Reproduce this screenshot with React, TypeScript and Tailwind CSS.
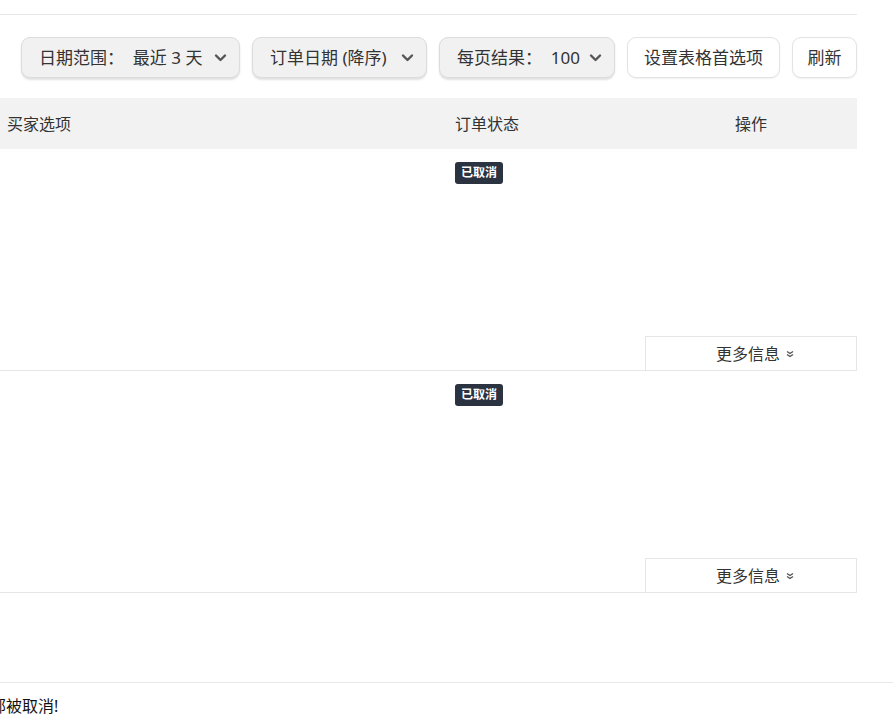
import React from "react";

const font = { fontFamily: '"Noto Sans", "Noto Sans CJK SC", sans-serif' };

const Chevron = () => (
  <svg width="13" height="12" viewBox="0 0 13 12" className="text-[#555]">
    <path d="M2 3.5l4.5 4.5 4.5-4.5" fill="none" stroke="currentColor" strokeWidth="2.4" strokeLinecap="round" strokeLinejoin="round" />
  </svg>
);

const DoubleChevron = () => (
  <svg width="8" height="8" viewBox="0 0 8 8" className="text-[#555]">
    <path d="M1 1.5l3 2 3-2M1 4.5l3 2 3-2" fill="none" stroke="currentColor" strokeWidth="1.4" />
  </svg>
);

const SelectButton = ({ label, width }: { label: string; width: string }) => (
  <div
    className={`${width} h-[41px] flex items-center justify-between pl-[17px] pr-[12px] rounded-[9px] bg-[#f1f1f1] border border-[#dcdcdc] shadow-[0_2px_2px_rgba(0,0,0,0.12)] text-[17px] text-[#333]`}
  >
    <span className="whitespace-pre">{label}</span>
    <Chevron />
  </div>
);

const PlainButton = ({ label, width }: { label: string; width: string }) => (
  <div
    className={`${width} h-[41px] flex items-center justify-center rounded-[9px] bg-white border border-[#e3e3e3] shadow-[0_1px_2px_rgba(0,0,0,0.06)] text-[17px] text-[#333]`}
  >
    {label}
  </div>
);

const OrderRow = () => (
  <div className="flex h-[222px]">
    <div className="w-[448px] border-b border-[#e6e6e6]" />
    <div className="w-[197px] border-b border-[#e6e6e6] pl-[7px] pt-[10px]">
      <span className="inline-flex h-[22px] items-center px-[6px] rounded-[3px] bg-[#2b3240] text-white text-[12px] font-bold leading-none">
        已取消
      </span>
    </div>
    <div className="w-[212px] flex flex-col justify-end">
      <div className="h-[35px] border border-[#e6e6e6] flex items-center justify-center gap-[6px] pl-[8px] text-[16px] text-[#333]">
        <span>更多信息</span>
        <DoubleChevron />
      </div>
    </div>
  </div>
);

export default function App() {
  return (
    <div style={font} className="w-[893px] h-[716px] overflow-hidden bg-white">
      <div className="w-[857px]">
        <div className="h-[15px] border-b border-[#e6e6e6]" />
        <div className="flex justify-end gap-[12px] pt-[22px] pb-[20px]">
          <SelectButton label="日期范围：  最近 3 天" width="w-[219px]" />
          <SelectButton label="订单日期 (降序)" width="w-[175px]" />
          <SelectButton label="每页结果：  100" width="w-[176px]" />
          <PlainButton label="设置表格首选项" width="w-[153px]" />
          <PlainButton label="刷新" width="w-[65px]" />
        </div>
        <div className="flex h-[51px] items-center bg-[#f2f2f2] text-[16px] text-[#333]">
          <div className="w-[448px] pl-[7px]">买家选项</div>
          <div className="w-[197px] pl-[7px]">订单状态</div>
          <div className="w-[212px] text-center">操作</div>
        </div>
        <OrderRow />
        <OrderRow />
        <div className="h-[89px]" />
      </div>
      <div className="border-t border-[#e8e8e8] pt-[11px]">
        <div className="ml-[-26px] text-[16px] text-[#111] whitespace-nowrap">全部被取消!</div>
      </div>
    </div>
  );
}
